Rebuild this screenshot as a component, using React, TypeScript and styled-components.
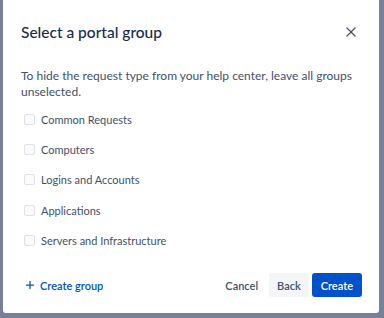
import styled, { createGlobalStyle } from "styled-components";
import { Plus, X } from "lucide-react";

const GlobalStyle = createGlobalStyle`
  html, body {
    margin: 0;
    padding: 0;
    background: #77829a;
  }
  body {
    font-family: Lato, "Noto Sans", sans-serif;
    color: #172b4d;
  }
`;

const Page = styled.div`
  width: 384px;
  height: 318px;
  padding: 0 5px 5px 3px;
  box-sizing: border-box;
`;

const Modal = styled.div`
  height: 313px;
  background: #fff;
  border-radius: 0 0 3px 3px;
  display: flex;
  flex-direction: column;
  box-sizing: border-box;
`;

const Header = styled.div`
  display: flex;
  align-items: center;
  justify-content: space-between;
  padding: 20px 20px 0 18px;
  height: 24px;
`;

const Title = styled.h1`
  margin: 0;
  font-size: 15.5px;
  font-weight: 500;
  color: #172b4d;
`;

const CloseButton = styled.button`
  border: none;
  background: none;
  padding: 0;
  display: flex;
  color: #42526e;
  cursor: pointer;
`;

const Body = styled.div`
  padding: 24px 18px 0;
  flex: 1;
`;

const Description = styled.p`
  margin: 0 0 4px;
  font-size: 12px;
  line-height: 16px;
  color: #42526e;
`;

const OptionList = styled.div`
  display: flex;
  flex-direction: column;
`;

const Option = styled.label`
  display: flex;
  align-items: center;
  gap: 6px;
  height: 30.3px;
  padding-left: 3px;
  font-size: 11px;
  color: #42526e;
`;

const Box = styled.span`
  width: 9px;
  height: 9px;
  border: 1px solid #dfe1e6;
  border-radius: 2px;
  background: #fafbfc;
`;

const Footer = styled.div`
  display: flex;
  align-items: center;
  padding: 0 17px 16px 21px;
  gap: 3px;
`;

const LinkButton = styled.button`
  display: flex;
  align-items: center;
  gap: 4px;
  border: none;
  background: none;
  padding: 0;
  font: inherit;
  font-size: 11px;
  font-weight: 600;
  color: #0052cc;
  margin-right: auto;
`;

const Button = styled.button<{ $variant?: "primary" | "subtle" | "default" }>`
  height: 24px;
  padding: 0 ${(p) => (p.$variant === "primary" ? "9px" : "8px")};
  border: none;
  border-radius: 3px;
  font: inherit;
  font-size: 11px;
  font-weight: 600;
  background: ${(p) =>
    p.$variant === "primary" ? "#0052cc" : p.$variant === "default" ? "#f4f5f7" : "transparent"};
  color: ${(p) => (p.$variant === "primary" ? "#fff" : "#42526e")};
`;

const groups = [
  "Common Requests",
  "Computers",
  "Logins and Accounts",
  "Applications",
  "Servers and Infrastructure",
];

export default function App() {
  return (
    <Page>
      <GlobalStyle />
      <Modal>
        <Header>
          <Title>Select a portal group</Title>
          <CloseButton aria-label="Close">
            <X size={16} strokeWidth={1.8} />
          </CloseButton>
        </Header>
        <Body>
          <Description>
            To hide the request type from your help center, leave all groups unselected.
          </Description>
          <OptionList>
            {groups.map((g) => (
              <Option key={g}>
                <Box />
                {g}
              </Option>
            ))}
          </OptionList>
        </Body>
        <Footer>
          <LinkButton>
            <Plus size={12} strokeWidth={2.5} />
            Create group
          </LinkButton>
          <Button $variant="subtle">Cancel</Button>
          <Button $variant="default">Back</Button>
          <Button $variant="primary">Create</Button>
        </Footer>
      </Modal>
    </Page>
  );
}
